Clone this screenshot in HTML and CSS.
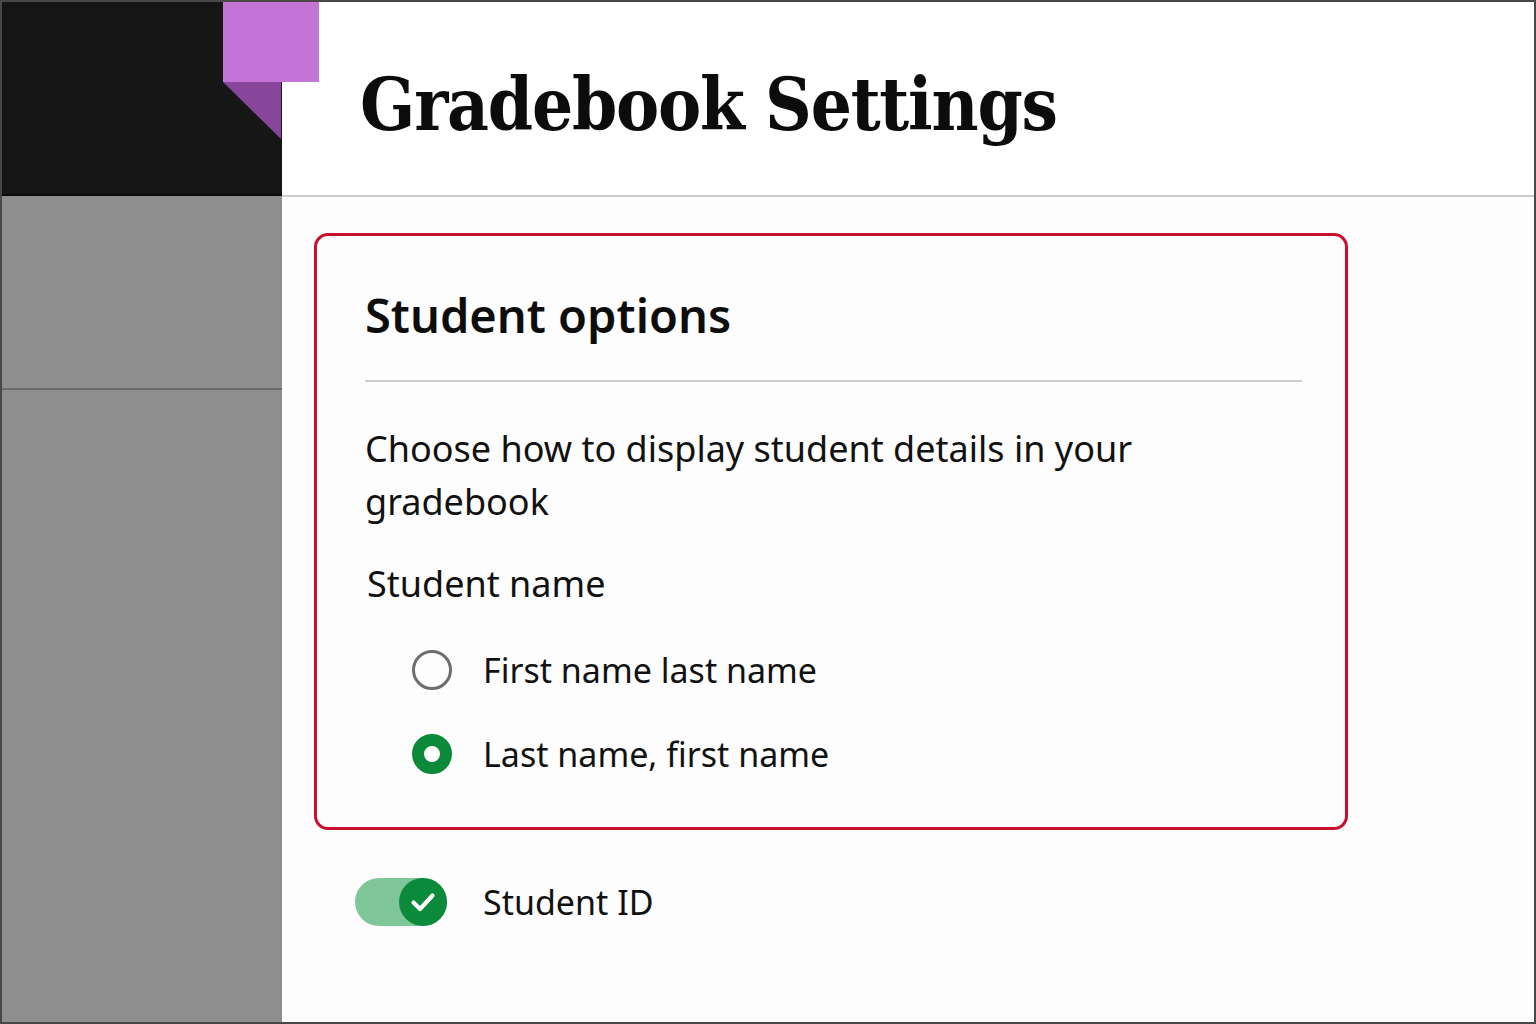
FILE: index.html
```html
<!DOCTYPE html>
<html lang="en">

<head>
    <meta charset="UTF-8">
    <meta name="viewport" content="width=device-width, initial-scale=1.0">
    <title>Gradebook Settings</title>
    <link rel="stylesheet" href="styles.css">
</head>

<body>
    <div class="frame">
        <!-- 左侧栏 -->
        <div class="side">
            <div class="side-top"></div>
            <div class="side-block"></div>
            <div class="side-rest"></div>
        </div>

        <!-- 紫色书签 -->
        <div class="tab">
            <svg width="96" height="138" viewBox="0 0 96 138">
                <rect x="0" y="0" width="96" height="80" fill="#c473d6" />
                <polygon points="0,80 58,80 58,137" fill="#87469a" />
            </svg>
        </div>

        <div class="main">
            <div class="header">
                <h1 class="title">Gradebook Settings</h1>
            </div>

            <div class="content">
                <div class="card">
                    <h2 class="card-title">Student options</h2>
                    <p class="desc">Choose how to display student details in your gradebook</p>
                    <p class="label">Student name</p>
                    <ul class="radios">
                        <li class="radio-row">
                            <span class="radio"></span>
                            <span class="radio-text">First name last name</span>
                        </li>
                        <li class="radio-row">
                            <span class="radio checked"></span>
                            <span class="radio-text">Last name, first name</span>
                        </li>
                    </ul>
                </div>

                <div class="toggle-row">
                    <span class="toggle">
                        <span class="knob">
                            <svg width="28" height="28" viewBox="0 0 28 28">
                                <path d="M4.5 14.5 L11 21 L23.5 7.5" fill="none" stroke="#fff" stroke-width="4.2"
                                    stroke-linecap="round" stroke-linejoin="round" />
                            </svg>
                        </span>
                    </span>
                    <span class="toggle-text">Student ID</span>
                </div>
            </div>
        </div>
    </div>
</body>

</html>
```

FILE: styles.css
```css
* {
    margin: 0;
    padding: 0;
    box-sizing: border-box;
}

body {
    background-color: #fdfdfd;
    font-family: "Noto Sans", "Open Sans", sans-serif;
    color: #111;
}

.frame {
    width: 1536px;
    height: 1024px;
    border: 2px solid #484848;
    display: grid;
    grid-template-columns: 280px 1fr;
    /* 书签定位用 */
    position: relative;
    overflow: hidden;
}

/* 左侧栏 */
.side {
    display: flex;
    flex-direction: column;
    background-color: #8e8e8e;
}

.side-top {
    height: 194px;
    background-color: #161616;
    border-bottom: 2px solid #0a0a0a;
}

.side-block {
    height: 194px;
    border-bottom: 2px solid #6c6c6c;
}

.side-rest {
    flex: 1;
}

.tab {
    position: absolute;
    left: 221px;
    top: 0;
    line-height: 0;
}

/* 右侧主体 */
.main {
    background-color: #fdfdfd;
    display: flex;
    flex-direction: column;
}

.header {
    height: 195px;
    border-bottom: 2px solid #cdcdcd;
    padding: 58px 0 0 78px;
    background-color: #fff;
}

.title {
    font-family: "DejaVu Serif Condensed", "DejaVu Serif", "Liberation Serif", serif;
    font-stretch: condensed;
    font-weight: bold;
    font-size: 72px;
    line-height: 90px;
    letter-spacing: -1.2px;
    color: #0c0c0c;
}

.content {
    padding: 36px 0 0 32px;
}

.card {
    width: 1034px;
    height: 597px;
    border: 3px solid #c8102e;
    border-radius: 14px;
    padding: 51px 43px 0 48px;
}

.card-title {
    font-size: 47px;
    font-weight: 600;
    line-height: 56px;
    padding-bottom: 37px;
    border-bottom: 2px solid #cfcfcf;
    color: #0d0d0d;
}

.desc {
    font-size: 36px;
    line-height: 53px;
    margin-top: 40px;
    max-width: 820px;
}

.label {
    font-size: 36px;
    line-height: 53px;
    margin-top: 29px;
    padding-left: 2px;
}

.radios {
    list-style: none;
    margin-top: 40px;
    padding-left: 47px;
}

.radio-row {
    display: flex;
    align-items: center;
    height: 40px;
    margin-bottom: 44px;
}

.radio {
    width: 40px;
    height: 40px;
    border-radius: 50%;
    border: 3px solid #6e6e6e;
    margin-right: 31px;
}

.radio.checked {
    border: 12px solid #0b8a3b;
    background-color: #fff;
}

.radio-text {
    font-size: 34px;
}

.toggle-row {
    display: flex;
    align-items: center;
    margin-top: 48px;
    padding-left: 41px;
}

.toggle {
    width: 92px;
    height: 48px;
    border-radius: 24px;
    background-color: #7fc699;
    display: flex;
    justify-content: flex-end;
    margin-right: 36px;
}

.knob {
    width: 48px;
    height: 48px;
    border-radius: 50%;
    background-color: #0b8a3b;
    display: flex;
    align-items: center;
    justify-content: center;
}

.toggle-text {
    font-size: 34px;
}
```
